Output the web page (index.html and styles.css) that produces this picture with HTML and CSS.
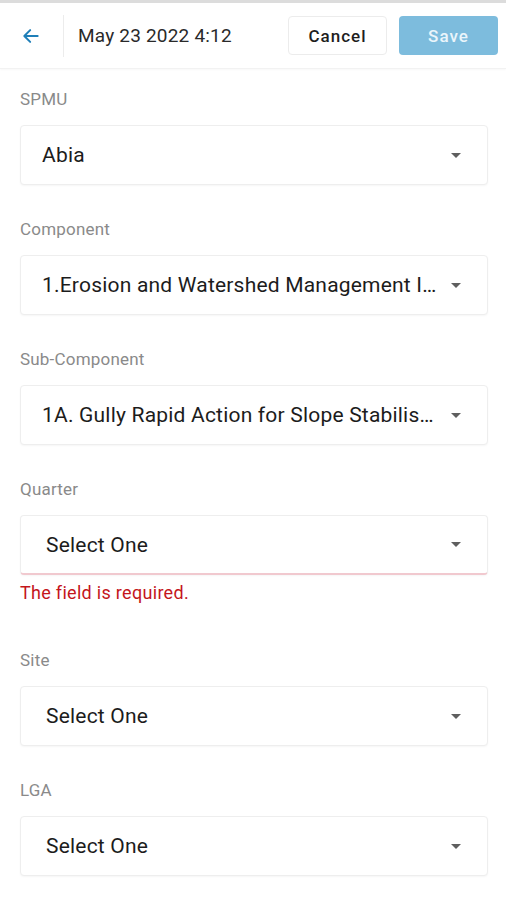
FILE: index.html
```html
<!DOCTYPE html>
<html>

	<head>
		<meta charset="UTF-8">
		<title>Edit entry</title>
		<link rel="stylesheet" href="styles.css">
	</head>

	<body>

		<div class="topline"></div>

		<div class="header">
			<a class="back" href="#">
				<svg width="20" height="20" viewBox="0 0 24 24">
					<path d="M20 12H5M11 5l-7 7 7 7" fill="none" stroke="#1f7fb8" stroke-width="2.4" stroke-linecap="round" stroke-linejoin="round"/>
				</svg>
			</a>
			<div class="divider"></div>
			<div class="date">May 23 2022 4:12</div>
			<button class="btn btnCancel">Cancel</button>
			<button class="btn btnSave">Save</button>
		</div>

		<div class="form">

			<div class="field">
				<div class="label">SPMU</div>
				<div class="select">
					<span class="value">Abia</span>
					<span class="caret"></span>
				</div>
			</div>

			<div class="field">
				<div class="label">Component</div>
				<div class="select">
					<span class="value">1.Erosion and Watershed Management Infrastructure</span>
					<span class="caret"></span>
				</div>
			</div>

			<div class="field">
				<div class="label">Sub-Component</div>
				<div class="select">
					<span class="value">1A. Gully Rapid Action for Slope Stabilisation</span>
					<span class="caret"></span>
				</div>
			</div>

			<div class="field">
				<div class="label">Quarter</div>
				<div class="select empty invalid">
					<span class="value">Select One</span>
					<span class="caret"></span>
				</div>
				<div class="error">The field is required.</div>
			</div>

			<div class="field">
				<div class="label">Site</div>
				<div class="select empty">
					<span class="value">Select One</span>
					<span class="caret"></span>
				</div>
			</div>

			<div class="field">
				<div class="label">LGA</div>
				<div class="select empty">
					<span class="value">Select One</span>
					<span class="caret"></span>
				</div>
			</div>

		</div>

	</body>

</html>
```

FILE: styles.css
```css
* {
	margin: 0px;
	padding: 0px;
	box-sizing: border-box;
}

body {
	font-family: Roboto, "Liberation Sans", sans-serif;
	background-color: #fff;
	color: #222;
	width: 506px;
}

.topline {
	height: 3px;
	background-color: #dcdcdc;
}

.header {
	display: flex;
	align-items: center;
	height: 66px;
	padding: 0 8px 0 20px;
	border-bottom: 1px solid #f2f2f2;
	box-shadow: 0 1px 2px rgba(0, 0, 0, 0.03);
}

.back {
	display: flex;
	width: 22px;
	height: 22px;
	align-items: center;
	justify-content: center;
}

.divider {
	width: 1px;
	height: 42px;
	background-color: #ececec;
	margin: 0 14px 0 21px;
}

.date {
	flex: 1;
	font-size: 19px;
	color: #2a2a2a;
	letter-spacing: 0.2px;
}

.btn {
	height: 39px;
	width: 99px;
	border-radius: 4px;
	font-family: Roboto, "Liberation Sans", sans-serif;
	font-size: 17px;
	font-weight: 500;
	letter-spacing: 1px;
	cursor: pointer;
}

.btnCancel {
	background-color: #fff;
	border: 1px solid #ececec;
	color: #1e1e1e;
	margin-right: 12px;
}

.btnSave {
	background-color: #7dbcdd;
	border: none;
	color: #eaf5fb;
}

.form {
	padding: 21px 18px 0 20px;
}

.field {
	margin-bottom: 35px;
}

.label {
	font-size: 17px;
	letter-spacing: 0.2px;
	color: #8a8a8a;
	height: 18px;
	line-height: 18px;
	margin-bottom: 17px;
}

.select {
	display: flex;
	align-items: center;
	height: 60px;
	padding: 0 26px 0 21px;
	border: 1px solid #eeeeee;
	border-radius: 4px;
	box-shadow: 0 1px 2px rgba(0, 0, 0, 0.04);
	background-color: #fff;
}

.select.empty {
	padding-left: 25px;
}

.select.invalid {
	border-bottom: 2px solid #f1c9cf;
}

.value {
	flex: 1;
	font-size: 21px;
	letter-spacing: 0.2px;
	color: #1c1c1c;
	white-space: nowrap;
	overflow: hidden;
	text-overflow: ellipsis;
	margin-right: 12px;
}

.caret {
	width: 0;
	height: 0;
	border-left: 5px solid transparent;
	border-right: 5px solid transparent;
	border-top: 5px solid #5f5f5f;
}

.error {
	font-size: 18px;
	letter-spacing: 0.3px;
	color: #c4161c;
	margin-top: 7px;
	line-height: 22px;
	padding-bottom: 12px;
}
```
